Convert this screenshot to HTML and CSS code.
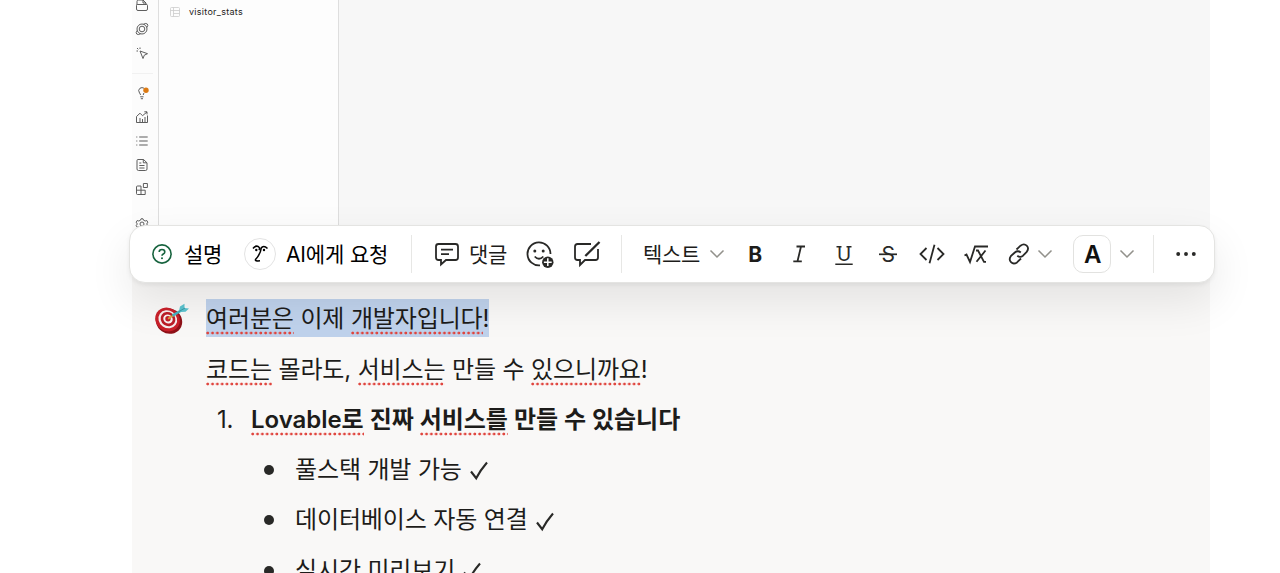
FILE: index.html
```
<!DOCTYPE html>
<html lang="ko">
<head>
<meta charset="UTF-8">
<meta name="viewport" content="width=device-width, initial-scale=1.0">
<title>Lovable</title>
<link rel="stylesheet" href="styles.css">
</head>
<body>
<div class="page">
  <div class="preview">
    <div class="rail">
      <svg class="rail-icon" viewBox="0 0 12 12"><path d="M1 6V2.500Q1 1 2.500 1H7l3 3v2M1.500 5.500h9q1 0 1 1V10q0 1.500-1.500 1.500H2Q.5 11.500.5 10V6.500q0-1 1-1M7 1v3h3"/></svg>
      <svg class="rail-icon" viewBox="0 0 12 12"><circle cx="6" cy="6" r="5"/><circle cx="6" cy="6" r="2.800"/><path d="M7.500 1.200Q10-.2 11.300 1t-.5 3.500M4.500 10.800Q2 12.200.7 11t.5-3.500"/></svg>
      <svg class="rail-icon" viewBox="0 0 12 12"><path d="M4 4l7.500 2.700-3.200 1.500L7 11.500zM.5 4H2M4 .5V2M1 1l1.300 1.300"/></svg>
      <div class="rail-line"></div>
      <svg class="rail-icon" viewBox="0 0 12 12"><path d="M4.500 8Q4.500 7 3.500 6 1.500 3 4 1.200 6 0 8 1.200M8 6Q7.300 7 7.300 8M4.200 9.800h3.300M4.800 11.700h2.200"/><circle class="badge" cx="10" cy="3.200" r="2.700"/></svg>
      <svg class="rail-icon" viewBox="0 0 12 12"><path d="M.5 5.500v6h11V4.500M.5 5.500 4 2.200l2.500 2.500L11 1M8.300.8H11v2.600M4 11V7M6.500 11V8M9 11V6"/></svg>
      <svg class="rail-icon" viewBox="0 0 12 12"><path d="M3.200 2h8.500M3.200 6h8.500M3.200 10h8.500M.3 2h1M.3 6h1M.3 10h1"/></svg>
      <svg class="rail-icon" viewBox="0 0 12 12"><path d="M2 .5h5.500L11 3.800v6.200q0 1.500-1.500 1.500h-7Q1 11.500 1 10V1.500Q1 .5 2 .5M7.300.5v3.300h3.500M3.300 4h2M3.300 6.500h5.200M3.300 9h5.200"/></svg>
      <svg class="rail-icon" viewBox="0 0 12 12"><path d="M.7 7.200h8.500v4.300H1.500Q.5 11.500.5 10.500V4Q.5 3 1.500 3H5v8.500M7.400.5h4V4.500h-4z"/></svg>
      <svg class="rail-icon rail-settings" viewBox="0 0 12 12"><path d="M5 .8h2l.5 1.400 1.700.8 1.600-.5 1 1.700L10.700 6l1.100 1.600-1 1.700-1.600-.3-1.700.8L7 11.300H5l-.5-1.500L2.800 9l-1.600.3-1-1.700L1.300 6 .2 4.200l1-1.700 1.600.5 1.700-.8z"/><circle cx="6" cy="6" r="2"/></svg>
    </div>
    <div class="tables">
      <svg class="table-icon" viewBox="0 0 10 10"><rect x=".5" y=".5" width="9" height="9" rx="1"/><path d="M.5 3.500h9M3.500.5v9M3.500 6.500h6"/></svg>
      <span>visitor_stats</span>
    </div>
  </div>

  <div class="callout">
    <svg class="target" viewBox="0 0 36 32">
      <ellipse cx="15" cy="18" rx="13.500" ry="12.500" transform="rotate(35 15 18)" fill="#8f1118"/>
      <ellipse cx="13.500" cy="16.500" rx="12.700" ry="11.500" transform="rotate(35 13.500 16.500)" fill="#c9202a"/>
      <ellipse cx="13.800" cy="16.300" rx="9.700" ry="8.700" transform="rotate(35 13.800 16.300)" fill="#f7eeee"/>
      <ellipse cx="14" cy="16.200" rx="7.600" ry="6.900" transform="rotate(35 14 16.200)" fill="#bd1d27"/>
      <ellipse cx="14" cy="16" rx="4.900" ry="4.400" transform="rotate(35 14 16)" fill="#faf4f3"/>
      <circle cx="14" cy="15.800" r="2.700" fill="#c61e29"/>
      <path d="M14 15.800 20 12" stroke="#d6a23a" stroke-width="1.600"/>
      <path d="M18.500 12.700 28 7" stroke="#45b3c0" stroke-width="2.600"/>
      <path d="M25 8 26 3.500 30.500.8 30.500 5 35 5.500 31.500 8.700 27 9z" fill="#5cc3cf"/>
      <path d="M25 8.500 31 5" stroke="#2f8f9b" stroke-width=".8"/>
    </svg>
    <div class="content">
      <p><span class="selected"><span class="spell">여러분은</span> 이제 <span class="spell">개발자입니다</span>!</span></p>
      <p><span class="spell">코드는</span> 몰라도, <span class="spell">서비스는</span> 만들 수 <span class="spell">있으니까요</span>!</p>
      <div class="numbered"><span class="num">1.</span><b><span class="spell">Lovable로</span> 진짜 <span class="spell">서비스를</span> 만들 수 있습니다</b></div>
      <ul>
        <li>풀스택 개발 가능 <svg class="check" viewBox="0 0 18 19"><path d="M1 10.500 6.200 17.200Q10.500 9 17 1.500"/></svg></li>
        <li>데이터베이스 자동 연결 <svg class="check" viewBox="0 0 18 19"><path d="M1 10.500 6.200 17.200Q10.500 9 17 1.500"/></svg></li>
        <li>실시간 미리보기 <svg class="check" viewBox="0 0 18 19"><path d="M1 10.500 6.200 17.200Q10.500 9 17 1.500"/></svg></li>
      </ul>
    </div>
  </div>

  <div class="toolbar">
    <div class="group explain">
      <svg class="help" width="20" height="20" viewBox="0 0 20 20"><circle cx="10" cy="10" r="9.100"/><path d="M7.200 8Q7.200 5.500 10 5.500T12.800 8Q12.800 9.200 11.300 10 10 10.700 10 11.800"/><circle class="dot" cx="10" cy="14.300" r="1"/></svg>
      <span class="label">설명</span>
    </div>
    <div class="group ask">
      <span class="face"><svg width="18" height="20" viewBox="0 0 18 20"><path d="M2 4.500Q4.500 1 7.500 2.700 9.500 4.500 7.800 6M9.800 4.500Q12.500.3 16.500 4.500M10.300 4Q9.500 10 4.500 15.600 3.700 17.300 9 16.800" stroke-width="1.500"/><circle class="eye" cx="5.300" cy="6" r="1.200"/><circle class="eye" cx="13" cy="6" r="1.200"/></svg></span>
      <span class="label">AI에게 요청</span>
    </div>
    <div class="group comments">
      <svg width="26" height="26" viewBox="0 0 26 26"><path d="M4.500 3h17Q24 3 24 5.500v11Q24 19 21.500 19H12l-5 4.500V19H4.500Q2 19 2 16.500v-11Q2 3 4.500 3zM7 8.700h12M7 13.200h8"/></svg>
      <span class="label comment-label">댓글</span>
      <svg class="smile" width="30" height="30" viewBox="0 0 30 30"><path d="M25.500 15A11.500 11.500 0 1 0 15 26.400M9.700 17.500Q14 22 18.300 17.500"/><circle class="dot" cx="9.800" cy="12" r="1.500"/><circle class="dot" cx="18.200" cy="12" r="1.500"/><circle class="dot" cx="22.800" cy="23.200" r="5.700"/><path d="M22.800 19.300v7.800M18.900 23.200h7.800" stroke="#fff" stroke-width="1.500"/></svg>
      <svg class="edit" width="28" height="28" viewBox="0 0 28 28"><path d="M18 4H4.500Q2 4 2 6.500v11Q2 20 4.500 20H7v5l5-5h10.500Q25 20 25 17.500V9"/><path d="M12.300 16 26.500 2" stroke-width="2.300"/></svg>
    </div>
    <div class="group format">
      <span class="label type">텍스트</span>
      <svg class="chevron" viewBox="0 0 16 10"><path d="M1.500 1.500 8 8l6.500-6.500"/></svg>
      <span class="btn bold">B</span>
      <svg class="btn" viewBox="0 0 28 28"><path d="M11.500 6.500h8.500M8.300 21.300h8.500M16 6.500l-3.500 14.800"/></svg>
      <svg class="btn" viewBox="0 0 28 28"><text x="14" y="20.500" text-anchor="middle">U</text><path d="M6.500 6.700h5M16.500 6.700h5M5.300 24.200h17.400" stroke-width="1.600"/></svg>
      <svg class="btn" viewBox="0 0 28 28"><text class="strike" x="14" y="21.500" text-anchor="middle">S</text><path d="M5 14.300h18" stroke-width="1.700"/></svg>
      <svg class="btn" viewBox="0 0 28 28"><path d="M8.500 8 2.500 14l6 6M19.500 8l6 6-6 6M16.500 4.700l-5 18.600"/></svg>
      <svg class="btn" viewBox="0 0 28 28"><path d="M2.500 15.500l2-1L8 22 13 6.500h13M14 10.500h2L22 21.800h2M23.500 10.500 14.500 21.800"/></svg>
      <svg class="btn link" viewBox="0 0 28 28"><path d="M11.500 9.500 15.500 5.700q3.500-2.700 6.200 0t0 6.200L18 15.700q-3 2.300-5.700 0M15.800 12.500q-3-2.500-6 0L5.800 16.200q-2.300 3.400.2 6t6 .2L16 18.500"/></svg>
      <svg class="chevron link-chevron" viewBox="0 0 16 10"><path d="M1.500 1.500 8 8l6.500-6.500"/></svg>
      <span class="color">A</span>
      <svg class="chevron" viewBox="0 0 16 10"><path d="M1.500 1.500 8 8l6.500-6.500"/></svg>
    </div>
    <div class="group more">
      <svg width="22" height="6" viewBox="0 0 22 6"><circle class="dot" cx="3.200" cy="3" r="1.950"/><circle class="dot" cx="11" cy="3" r="1.950"/><circle class="dot" cx="18.800" cy="3" r="1.950"/></svg>
    </div>
  </div>
</div>
</body>
</html>
```

FILE: styles.css
```
body {
    margin: 0;
    background-color: #fff;
    color: #1d1c1a;
    font-family: Inter, "Noto Sans CJK KR", sans-serif;
}

.page {
    position: relative;
    height: 573px;
    overflow: hidden;
}

svg {
    flex: none;
    overflow: visible;
    fill: none;
    stroke: #292927;
    stroke-width: 1.8;
}

/* top: cropped preview of the editor */
.preview {
    display: flex;
    height: 245px;
    width: 1078px;
    margin-left: 132px;
    background-color: #f7f7f7;
}

.rail {
    display: flex;
    flex-direction: column;
    align-items: center;
    width: 26px;
    margin-top: -7px;
    background-color: #fcfcfc;
    border-right: 1px solid #dedede;
}

.rail-icon {
    width: 12px;
    height: 12px;
    margin: 6px 7px 6px 0;
    stroke: #555;
    stroke-width: 0.95;
}

.rail-line {
    width: 21px;
    height: 1px;
    margin: 8px 5px 7px 0;
    background-color: #f1f1f1;
}

.rail-settings {
    margin-top: 17px;
}

.badge {
    fill: #dc7a13;
    stroke: none;
}

.tables {
    display: flex;
    gap: 9px;
    width: 168px;
    padding: 7px 0 0 11px;
    background-color: #fdfdfd;
    border-right: 1px solid #dedede;
    font-size: 9px;
    line-height: 10px;
    letter-spacing: 0.28px;
}

.table-icon {
    width: 10px;
    height: 10px;
    stroke: #ccc;
    stroke-width: 0.8;
}

/* callout block */
.callout {
    display: flex;
    width: 1078px;
    height: 328px;
    margin-left: 132px;
    background-color: #f9f8f7;
}

.target {
    width: 36px;
    height: 32px;
    margin: 58px 0 0 22px;
    stroke: none;
}

.content {
    margin: 54px 0 0 16px;
    font-size: 24px;
    line-height: 40px;
    letter-spacing: -0.14px;
    white-space: nowrap;
}

.content p,
.numbered,
.content li {
    height: 38px;
    margin: 0 0 12.5px;
}

.selected {
    display: inline-block;
    height: 38px;
    background-color: #bfd2ec;
}

.spell {
    display: inline-block;
    height: 36px;
    background: radial-gradient(circle at 1.8px 2px, #e0453e 1.2px, transparent 1.7px) 0 100% / 4.83px 4px repeat-x;
}

.numbered {
    display: flex;
}

.numbered b {
    font-weight: 600;
}

.numbered b,
.content li {
    letter-spacing: -0.04px;
}

.num {
    width: 34px;
    padding-left: 11px;
}

.content ul {
    margin: 0;
    padding: 0;
    list-style: none;
}

.content li {
    display: flex;
    align-items: center;
    gap: 8px;
    padding-left: 58px;
    line-height: 42px;
    letter-spacing: -0.14px;
}

.content li::before {
    content: "";
    width: 10px;
    height: 10px;
    margin-right: 13px;
    border-radius: 50%;
    background-color: #292927;
}

.check {
    width: 18px;
    height: 19px;
    margin-top: 2px;
    stroke-width: 2.1;
}

/* floating toolbar */
.toolbar {
    position: absolute;
    left: 129px;
    top: 225px;
    display: flex;
    align-items: center;
    box-sizing: border-box;
    width: 1086px;
    height: 58px;
    border: 1px solid #e4e4e2;
    border-radius: 16px;
    background-color: #fff;
    box-shadow: 0 18px 44px rgba(0, 0, 0, 0.09), 0 2px 4px rgba(0, 0, 0, 0.06);
    font-size: 21px;
    letter-spacing: -0.3px;
    white-space: nowrap;
}

.group {
    display: flex;
    align-items: center;
    box-sizing: border-box;
    height: 38px;
}

.label {
    padding-bottom: 3px;
}

.explain {
    width: 114px;
    padding-left: 22px;
    gap: 12px;
}

.explain .label,
.ask .label {
    color: #000;
}

.help {
    stroke: #17633e;
    stroke-width: 1.6;
}

.dot {
    fill: #292927;
    stroke: none;
}

.help .dot {
    fill: #17633e;
}

.ask {
    width: 167px;
    gap: 10px;
    letter-spacing: -0.15px;
}

.face {
    display: flex;
    align-items: center;
    justify-content: center;
    box-sizing: border-box;
    width: 32px;
    height: 32px;
    border: 1px solid #e3e3e3;
    border-radius: 50%;
}

.face svg {
    stroke: #000;
}

.eye {
    fill: #000;
    stroke: none;
}

.comments,
.format,
.more {
    border-left: 1px solid #e7e7e5;
}

.comments {
    width: 210px;
    padding-left: 22px;
}

.comment-label {
    width: 46px;
    margin-left: 9px;
}

.smile {
    margin-left: 10px;
}

.edit {
    margin-left: 18px;
}

.format {
    width: 532px;
    padding-left: 21px;
}

.type {
    width: 66px;
}

.chevron {
    width: 16px;
    height: 10px;
    stroke: #92918b;
    stroke-width: 1.5;
}

.btn {
    width: 28px;
    height: 28px;
    margin-left: 16.3px;
}

.btn text {
    fill: #292927;
    stroke: none;
    font-size: 19px;
}

.btn .strike {
    font-size: 21px;
}

.bold {
    margin-left: 16px;
    font-size: 21px;
    font-weight: 700;
    line-height: 29px;
    text-align: center;
}

.link {
    margin-left: 15px;
}

.link-chevron {
    margin-left: 4px;
}

.color {
    box-sizing: border-box;
    width: 38px;
    height: 38px;
    margin: 0 8px 0 20px;
    border: 1px solid #e2e2e0;
    border-radius: 10px;
    color: #111;
    font-size: 24px;
    font-weight: 600;
    line-height: 37px;
    text-align: center;
}

.more {
    padding-left: 21px;
}
```
